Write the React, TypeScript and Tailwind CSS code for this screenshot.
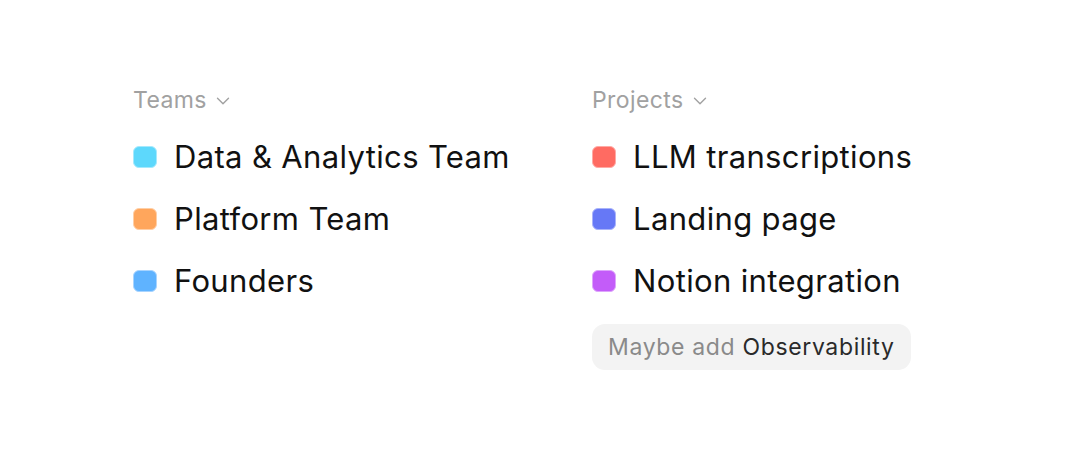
import { ChevronDown } from 'lucide-react';

type Item = { label: string; color: string; border: string };

const teams: Item[] = [
  { label: 'Data & Analytics Team', color: 'bg-[#5dd8fc]', border: 'border-[#a5e9fd]' },
  { label: 'Platform Team', color: 'bg-[#ffa65c]', border: 'border-[#ffcfa6]' },
  { label: 'Founders', color: 'bg-[#5fb3ff]', border: 'border-[#a8d4ff]' },
];

const projects: Item[] = [
  { label: 'LLM transcriptions', color: 'bg-[#ff6b62]', border: 'border-[#ffaaa5]' },
  { label: 'Landing page', color: 'bg-[#6678f6]', border: 'border-[#a9b3fa]' },
  { label: 'Notion integration', color: 'bg-[#c35cf9]', border: 'border-[#dea5fc]' },
];

const Section = ({ title, items }: { title: string; items: Item[] }) => {
  return (
    <div>
      <div className="flex items-center gap-[5px] text-[23px] tracking-[0.4px] text-[#a1a1a1] h-[32px]">
        <span>{title}</span>
        <ChevronDown size={22} strokeWidth={1.5} className="mt-[1px]" />
      </div>
      <div className="mt-[10px] flex flex-col">
        {items.map((item) => (
          <div key={item.label} className="flex items-center gap-[17px] h-[62px]">
            <span
              className={`w-[24px] h-[22px] rounded-[6px] border ${item.color} ${item.border}`}
            />
            <span className="text-[31px] text-[#111] tracking-[0.35px]">{item.label}</span>
          </div>
        ))}
      </div>
    </div>
  );
};

export default function App() {
  return (
    <div
      className="w-[1070px] h-[460px] bg-white pl-[133px] pt-[84px] flex"
      style={{ fontFamily: 'Inter, "Noto Sans", sans-serif' }}
    >
      <div className="w-[459px]">
        <Section title="Teams" items={teams} />
      </div>
      <div>
        <Section title="Projects" items={projects} />
        <div className="mt-[12px] inline-flex items-center h-[46px] px-[16px] rounded-[13px] bg-[#f3f3f3] text-[23px] tracking-[0.65px]">
          <span className="text-[#8a8a8a]">Maybe add&nbsp;</span>
          <span className="text-[#2a2a2a]">Observability</span>
        </div>
      </div>
    </div>
  );
}
